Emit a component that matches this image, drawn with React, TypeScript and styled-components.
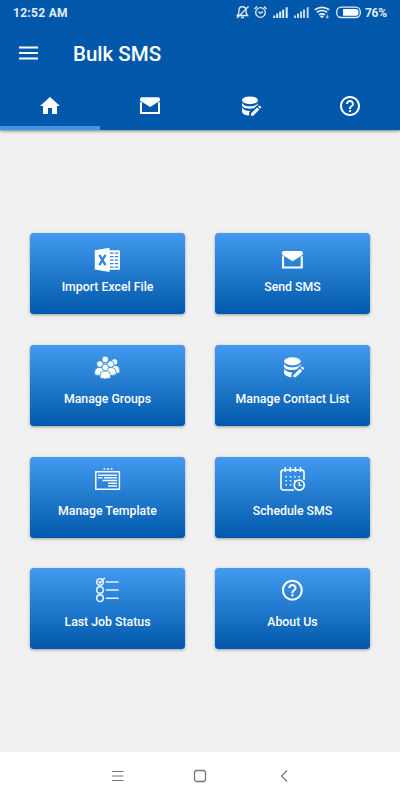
import React from "react";
import styled, { createGlobalStyle } from "styled-components";

const BLUE = "#0158ab";
const CARD_BLUE = "#2f86da";

const GlobalStyle = createGlobalStyle`
  * { box-sizing: border-box; }
  html, body { margin: 0; padding: 0; }
  body { font-family: Roboto, "Liberation Sans", sans-serif; background: #f0f0f0; }
  svg { display: block; }
`;

const Screen = styled.div`
  width: 400px;
  height: 800px;
  display: flex;
  flex-direction: column;
  overflow: hidden;
  background: #f0f0f0;
`;

const Header = styled.header`
  height: 130px;
  flex: none;
  display: flex;
  flex-direction: column;
  background: ${BLUE};
  color: #fff;
  box-shadow: 0 1px 3px rgba(0, 0, 0, 0.5);
`;

const StatusBar = styled.div`
  height: 25px;
  display: flex;
  align-items: center;
  justify-content: space-between;
  padding: 0 13px;
  color: #e3edf8;
`;

const Clock = styled.span`
  font-size: 12px;
  font-weight: 700;
  letter-spacing: 0.3px;
`;

const StatusIcons = styled.div`
  display: flex;
  align-items: center;
`;

const Battery = styled.span`
  width: 22px;
  margin-left: 1px;
  font-size: 12px;
  font-weight: 700;
  letter-spacing: -0.3px;
`;

const Toolbar = styled.div`
  height: 57px;
  display: flex;
  align-items: center;
  padding: 0 0 2px 19px;
`;

const Title = styled.h1`
  margin: 2px 0 0 35px;
  font-size: 20.5px;
  line-height: 24px;
  font-weight: 500;
`;

const Tabs = styled.nav`
  height: 48px;
  display: grid;
  grid-template-columns: repeat(4, 1fr);
`;

const Tab = styled.button<{ $active?: boolean }>`
  display: flex;
  justify-content: center;
  padding: 12px 0 0;
  border: 0;
  border-bottom: 4px solid ${(p) => (p.$active ? "#3f95ea" : "transparent")};
  background: none;
  color: #fff;
`;

const Main = styled.main`
  flex: 1;
  display: grid;
  grid-template-columns: repeat(2, 155px);
  grid-auto-rows: 81px;
  gap: 30.75px 30px;
  align-content: start;
  padding: 103px 0 0 30px;
`;

const Card = styled.button`
  display: flex;
  flex-direction: column;
  align-items: center;
  justify-content: flex-start;
  padding: 8px 0 0;
  border: 0;
  border-radius: 3.5px;
  background: linear-gradient(#429bef, ${BLUE});
  box-shadow: 0 1px 3px rgba(0, 0, 0, 0.36);
  color: #fff;
  font-family: inherit;
`;

const IconSlot = styled.span<{ $low?: boolean }>`
  height: 38px;
  padding-top: ${(p) => (p.$low ? 5 : 0)}px;
`;

const Label = styled.span`
  font-size: 12.3px;
  line-height: 16px;
  font-weight: 500;
  white-space: nowrap;
`;

const NavBar = styled.footer`
  height: 48px;
  flex: none;
  display: flex;
  justify-content: space-between;
  align-items: center;
  padding: 0 107px 0 109px;
  background: #fff;
  color: #777;
`;

const Envelope = () => (
  <g>
    <path d="M3.2 3.200h17.600L22 4.400v2.400L12.200 13 2 6.800V4.400z" fill="currentColor" />
    <path d="M3 8.200V19h18V8.200" fill="none" stroke="currentColor" strokeWidth="2" />
  </g>
);

const Database = () => (
  <g fill="currentColor">
    <ellipse cx="12" cy="6.300" rx="8" ry="3.900" />
    <path d="M4 8.800c1.800 3 5 3.500 8 3.500s6.500-.5 8-3.500v1.700L15.900 14.200c-5 1.100-11 .3-11.900-2.700z" />
    <path d="M4 13.600c1.800 2.900 5 3.500 8.200 3.400l-1.100 1.500v3.100C7 21.300 4.400 20 4 17.700z" />
    <path d="M13 19.600l6.200-6.200 2.200 2.200-6.200 6.200H13zM20 12.600l.9-.9q.5-.4 1 0l1.100 1.100q.5.500 0 1l-.9.900z" />
  </g>
);

const Help = () => (
  <path
    fill="currentColor"
    d="M11 18h2v-2h-2v2zm1-16C6.480 2 2 6.480 2 12s4.480 10 10 10 10-4.480 10-10S17.520 2 12 2zm0 18c-4.410 0-8-3.590-8-8s3.590-8 8-8 8 3.590 8 8-3.590 8-8 8zm0-14c-2.210 0-4 1.790-4 4h2c0-1.100.900-2 2-2s2 .900 2 2c0 2-3 1.750-3 5h2c0-2.250 3-2.500 3-5 0-2.210-1.790-4-4-4z"
  />
);

const Home = () => <path fill="currentColor" d="M10 20v-6h4v6h5v-8h3L12 3 2 12h3v8z" />;

const Glyph = ({ children }: { children: React.ReactNode }) => (
  <svg width="24" height="24" viewBox="0 0 24 24">{children}</svg>
);

/* Card drawings share a 27x28 frame; 24-unit glyphs are centred inside it. */
const Centered = ({ children }: { children: React.ReactNode }) => (
  <g transform="translate(.9 1.700) scale(1.040)">{children}</g>
);

const Excel = () => (
  <g>
    <path d="M15 4.300h10.300q.7 0 .7.700v18q0 .700-.7.700H15z" fill="#fff" />
    <path d="M16 7.200h8.200M16 10.700h8.200M16 14.200h8.200M16 17.700h8.200M16 21.200h8.200" stroke={CARD_BLUE} strokeWidth="1.300" strokeDasharray="3.500 1.200" />
    <path d="M.8 4.300l14.700-2.600v24.400L.8 23.500z" fill="#fff" />
    <path d="M5.300 8.900l6.200 10.200M11.500 8.900l-6.200 10.200" stroke={CARD_BLUE} strokeWidth="2.300" />
  </g>
);

const Person = ({ x, y }: { x: number; y: number }) => (
  <g transform={`translate(${x} ${y})`} fill="#fff" stroke={CARD_BLUE} strokeWidth=".8">
    <path d="M-5.300 10.700V8.500q0-4.200 3.300-4.900h4q3.300.7 3.300 4.900v2.200q-5.300 1.800-10.600 0z" />
    <circle cy="0" r="3.300" />
  </g>
);

const Groups = () => (
  <g>
    <Person x={11.200} y={6.400} />
    <Person x={20.500} y={9} />
    <Person x={5.900} y={11} />
    <Person x={16.800} y={11} />
    <Person x={11.300} y={14.400} />
  </g>
);

const Template = () => (
  <g fill="none" stroke="#f3f8fe">
    <path d="M1.800 6.700h23.600v17.600H1.800z" strokeWidth="1.500" />
    <path d="M9.500 4h2M13 4h2M16.500 4h2" strokeWidth="1.700" />
    <path d="M4 10.200h19M4 12.700h4.500M10 12.700h13M8.500 15.400h14.500M14 18.300h9M14 21h9" strokeWidth="1.500" />
  </g>
);

const Schedule = () => (
  <g fill="none" stroke="#fff" strokeWidth="1.600">
    <path d="M15 25H4.500Q2 25 2 22.500V7.500Q2 5 4.500 5h18Q25 5 25 7.500V15" />
    <path d="M6.200 2v5M11.300 2v5M16.400 2v5M21.500 2v5" strokeWidth="1.500" />
    <path d="M6.500 11.800h15M6.500 15.800h11M6.500 19.800h7" strokeDasharray="1.500 2.800" />
    <circle cx="20.200" cy="20.100" r="5" strokeWidth="1.800" />
    <path d="M20.200 17v3.400h2.500" strokeWidth="1.300" />
  </g>
);

const Checklist = () => (
  <g fill="none" stroke="#e3f0fc" strokeWidth="1.600">
    <circle cx="6" cy="6" r="3.300" />
    <circle cx="6" cy="14" r="3.300" />
    <circle cx="6" cy="22.200" r="3.300" />
    <path d="M4.400 5.200l1.700 1.900 4.700-5.300" />
    <path d="M11.700 6h13M11.700 14h13M11.700 22.200h13" strokeWidth="1.400" />
  </g>
);

const StatusDrawing = () => (
  <svg width="128" height="16" viewBox="236 5 128 16" fill="none" stroke="currentColor" strokeWidth="1.300">
    <path d="M237.500 15.500h10c-1.500-1.500-1.500-2.500-1.500-5 0-5-7-5-7 0 0 2.500 0 3.500-1.500 5zM241 17.500h3M237 18L248.500 6.500" />
    <circle cx="260.500" cy="12.500" r="4.800" />
    <path d="M258.300 11.800l2.200 1.500 2.500-1.800M254.500 9l2.500-2.500M264 6.500l2.500 2.500" />
    <path d="M274.200 15.500V18M277.200 13.500V18M280.200 11.500V18M283.200 9.500V18M286.700 7.300V18" strokeWidth="2" />
    <g opacity=".85">
      <path d="M295 15.500V18M298 13.500V18M301 11.500V18M304 9.500V18M307.700 7.300V18" strokeWidth="2" />
    </g>
    <path d="M314.800 9.800q7.200-5 14.400 0M316.800 12.300q5.200-3.600 10.400 0M319 14.800q3-2 6 0" strokeWidth="1.700" />
    <path d="M320.300 16h3.400l-1.700 2zM327.300 14.500v3.500M326 16.800l1.300 1.400 1.300-1.400" fill="currentColor" strokeWidth=".7" />
    <rect x="336.700" y="7.200" width="23.600" height="10.300" rx="4.500" />
    <path d="M343 9h13q2.500 0 2.500 2.500v1.800q0 2.500-2.500 2.500h-13z" fill="#fff" stroke="none" />
  </svg>
);

const tabs = [<Home />, <Envelope />, <Database />, <Help />];

const cards: { label: string; icon: React.ReactNode; low?: boolean }[] = [
  { label: "Import Excel File", icon: <Excel />, low: true },
  { label: "Send SMS", icon: <Centered><Envelope /></Centered>, low: true },
  { label: "Manage Groups", icon: <Groups /> },
  { label: "Manage Contact List", icon: <Centered><Database /></Centered> },
  { label: "Manage Template", icon: <Template /> },
  { label: "Schedule SMS", icon: <Schedule /> },
  { label: "Last Job Status", icon: <Checklist /> },
  { label: "About Us", icon: <Centered><Help /></Centered> },
];

export default function App() {
  return (
    <Screen>
      <GlobalStyle />
      <Header>
        <StatusBar>
          <Clock>12:52 AM</Clock>
          <StatusIcons>
            <StatusDrawing />
            <Battery>76%</Battery>
          </StatusIcons>
        </StatusBar>
        <Toolbar>
          <svg width="19" height="14" viewBox="0 0 19 14" stroke="#fff" strokeWidth="2">
            <path d="M0 1.500h19M0 7h19M0 12.500h19" />
          </svg>
          <Title>Bulk SMS</Title>
        </Toolbar>
        <Tabs>
          {tabs.map((icon, i) => (
            <Tab key={i} $active={i === 0}>
              <Glyph>{icon}</Glyph>
            </Tab>
          ))}
        </Tabs>
      </Header>
      <Main>
        {cards.map((card) => (
          <Card key={card.label}>
            <IconSlot $low={card.low}>
              <svg width="27" height="28" viewBox="0 0 27 28">{card.icon}</svg>
            </IconSlot>
            <Label>{card.label}</Label>
          </Card>
        ))}
      </Main>
      <NavBar>
        <svg width="18" height="18" viewBox="0 0 18 18" stroke="currentColor">
          <path d="M3 4.500h11.500M3 9h11.500M3 13.500h11.500" />
        </svg>
        <svg width="18" height="18" viewBox="0 0 18 18" fill="none" stroke="currentColor" strokeWidth="1.300">
          <rect x="2.500" y="3.500" width="11" height="11" rx="2.500" />
        </svg>
        <svg width="18" height="18" viewBox="0 0 18 18" fill="none" stroke="currentColor" strokeWidth="1.200">
          <path d="M12 3.500L6.500 9l5.500 5.500" />
        </svg>
      </NavBar>
    </Screen>
  );
}
